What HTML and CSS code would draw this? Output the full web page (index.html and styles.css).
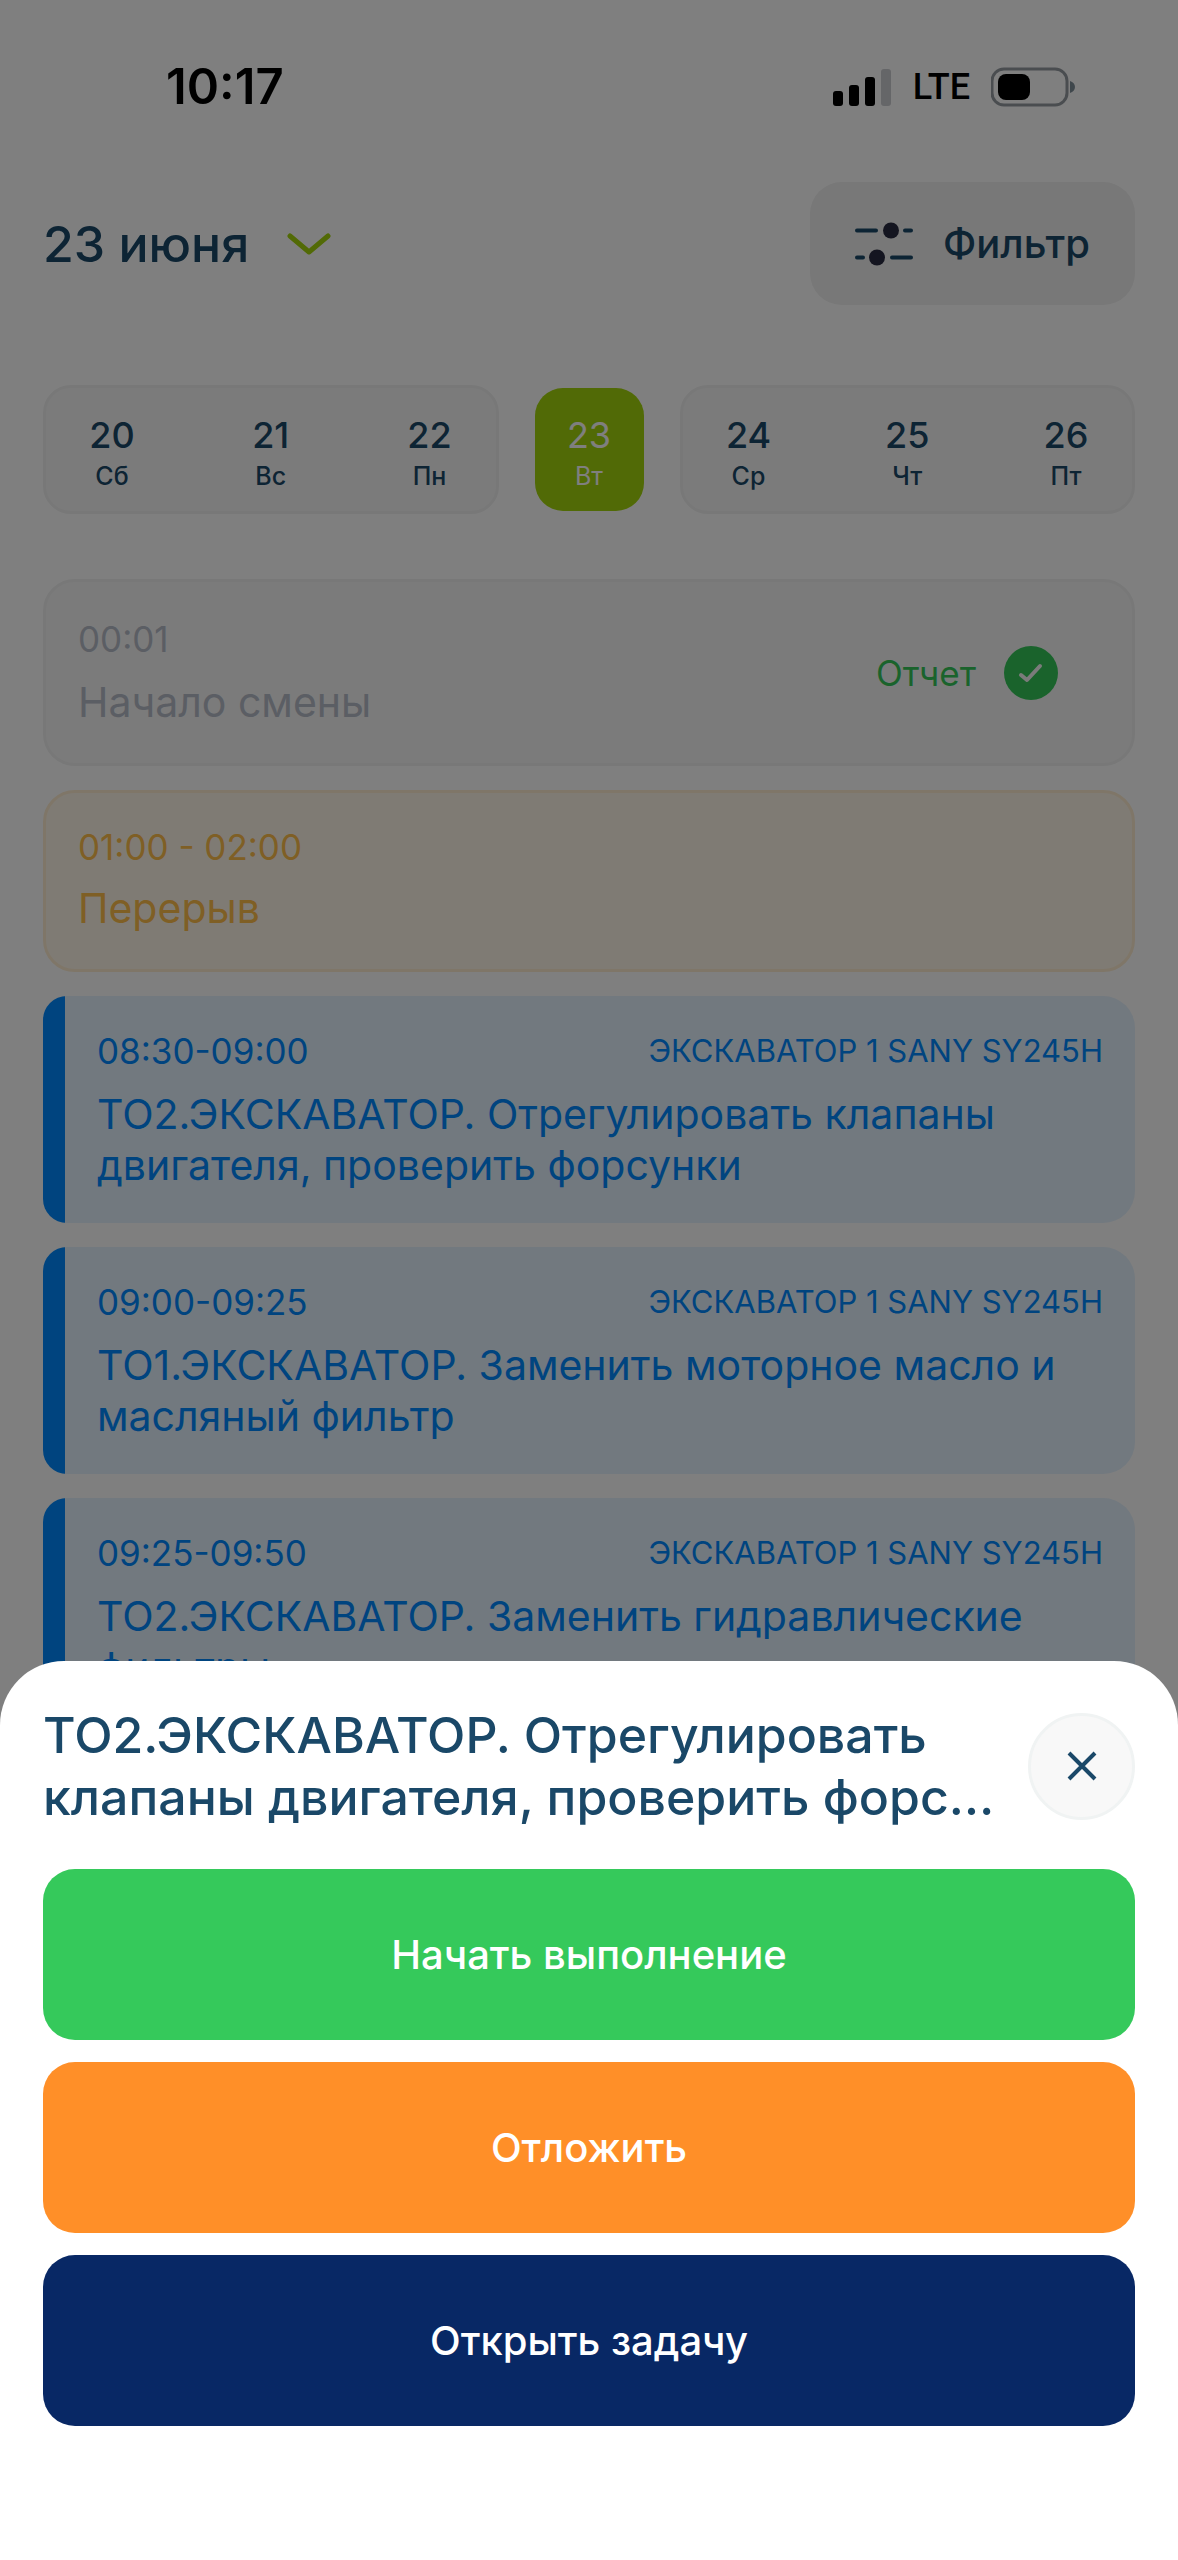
FILE: index.html
```html
<!DOCTYPE html>
<html lang="ru">
<head>
<meta charset="UTF-8">
<meta name="viewport" content="width=device-width, initial-scale=1">
<title>Задачи на 23 июня</title>
<link rel="stylesheet" href="styles.css">
</head>
<body>

<div class="status-bar">
  <span class="status-time">10:17</span>
  <div class="status-icons">
    <svg class="signal" viewBox="0 0 59 38" width="59" height="38">
      <rect x="0" y="23" width="10" height="15" rx="3"/>
      <rect x="16" y="17" width="10" height="21" rx="3"/>
      <rect x="32" y="9" width="10" height="29" rx="3"/>
      <rect x="48" y="1" width="10" height="37" rx="3" fill="#cbccd0"/>
    </svg>
    <span class="network">LTE</span>
    <svg class="battery" viewBox="0 0 84 40" width="84" height="40">
      <rect x="1" y="2" width="75" height="36" rx="12" fill="none" stroke="#959ba1" stroke-width="3"/>
      <rect x="7" y="7" width="32" height="26" rx="8"/>
      <path d="M79 14c3 1 5 3 5 6s-2 5-5 6z" fill="#7f8e99"/>
    </svg>
  </div>
</div>

<main class="page">
  <header class="header">
    <button class="date-picker" type="button">
      23 июня
      <svg viewBox="0 0 44 24" width="44" height="24">
        <path d="M3 4l19 16L41 4" fill="none" stroke="#a4d40c" stroke-width="5" stroke-linecap="round" stroke-linejoin="round"/>
      </svg>
    </button>
    <button class="filter" type="button">
      <svg viewBox="0 0 58 44" width="58" height="44">
        <g stroke="#1a4868" stroke-width="4" stroke-linecap="round">
          <path d="M2 8.500h19M50 8.500h6M2 35.500h6M37 35.500h19"/>
        </g>
        <circle cx="36" cy="8.500" r="8" fill="#292b40"/>
        <circle cx="22" cy="35.500" r="8" fill="#292b40"/>
      </svg>
      Фильтр
    </button>
  </header>

  <nav class="week">
    <div class="days">
      <button class="day" type="button"><span class="num">20</span><span class="name">Сб</span></button>
      <button class="day" type="button"><span class="num">21</span><span class="name">Вс</span></button>
      <button class="day" type="button"><span class="num">22</span><span class="name">Пн</span></button>
    </div>
    <button class="day active" type="button"><span class="num">23</span><span class="name">Вт</span></button>
    <div class="days">
      <button class="day" type="button"><span class="num">24</span><span class="name">Ср</span></button>
      <button class="day" type="button"><span class="num">25</span><span class="name">Чт</span></button>
      <button class="day" type="button"><span class="num">26</span><span class="name">Пт</span></button>
    </div>
  </nav>

  <section class="list">
    <article class="card shift">
      <div>
        <div class="time">00:01</div>
        <div class="title">Начало смены</div>
      </div>
      <div class="report">
        Отчет
        <svg viewBox="0 0 54 54" width="54" height="54">
          <circle cx="27" cy="27" r="27" fill="#34c759"/>
          <path d="M17 29l6 5 13-14" fill="none" stroke="#f7f7f7" stroke-width="4" stroke-linecap="round" stroke-linejoin="round"/>
        </svg>
      </div>
    </article>

    <article class="card break">
      <div class="time">01:00 - 02:00</div>
      <div class="title">Перерыв</div>
    </article>

    <article class="card task">
      <div class="task-top">
        <span class="time">08:30-09:00</span>
        <span class="machine">ЭКСКАВАТОР 1 SANY SY245H</span>
      </div>
      <div class="title">ТО2.ЭКСКАВАТОР. Отрегулировать клапаны двигателя, проверить форсунки</div>
    </article>

    <article class="card task">
      <div class="task-top">
        <span class="time">09:00-09:25</span>
        <span class="machine">ЭКСКАВАТОР 1 SANY SY245H</span>
      </div>
      <div class="title">ТО1.ЭКСКАВАТОР. Заменить моторное масло и масляный фильтр</div>
    </article>

    <article class="card task">
      <div class="task-top">
        <span class="time">09:25-09:50</span>
        <span class="machine">ЭКСКАВАТОР 1 SANY SY245H</span>
      </div>
      <div class="title">ТО2.ЭКСКАВАТОР. Заменить гидравлические фильтры</div>
    </article>
  </section>
</main>

<div class="backdrop"></div>

<section class="sheet" role="dialog" aria-labelledby="sheet-title">
  <div class="sheet-head">
    <h2 class="sheet-title" id="sheet-title">ТО2.ЭКСКАВАТОР. Отрегулировать клапаны двигателя, проверить форс…</h2>
    <button class="close" type="button" aria-label="Закрыть">
      <svg viewBox="0 0 30 30" width="30" height="30">
        <path d="M2 2l26 26M28 2L2 28" fill="none" stroke="#1a4868" stroke-width="4"/>
      </svg>
    </button>
  </div>
  <div class="actions">
    <button class="action start" type="button">Начать выполнение</button>
    <button class="action postpone" type="button">Отложить</button>
    <button class="action open" type="button">Открыть задачу</button>
  </div>
</section>

</body>
</html>
```
FILE: styles.css
```css
:root {
  --text: #1a4868;
  --muted: #b6bcc8;
  --blue: #0088ff;
  --green: #35c95b;
  --lime: #a2d40c;
  --grey-bg: #f7f7f7;
  --grey-border: #f0f1f1;
}
* {
  box-sizing: border-box;
}
body {
  margin: 0;
  min-height: 100vh;
  background: #fff;
  color: var(--text);
  font-family: Inter, Roboto, sans-serif;
}
button {
  border: none;
  padding: 0;
  background: none;
  color: inherit;
  font: inherit;
  cursor: pointer;
}
svg {
  display: block;
  flex-shrink: 0;
}

/* status bar */
.status-bar {
  display: flex;
  justify-content: space-between;
  align-items: center;
  padding: 58px 103px 66px 166px;
  color: #000;
}
.status-time {
  font-size: 49px;
  line-height: 58px;
  font-weight: 600;
}
.status-icons {
  display: flex;
  align-items: center;
  gap: 21px;
}
.network {
  font-family: Roboto, sans-serif;
  font-size: 36px;
  line-height: 48px;
  font-weight: 500;
}

/* header */
.page {
  padding: 0 43px;
}
.header {
  display: flex;
  justify-content: space-between;
  align-items: center;
}
.date-picker {
  display: flex;
  align-items: center;
  gap: 38px;
  font-size: 50px;
  line-height: 62px;
  font-weight: 500;
}
.filter {
  display: flex;
  align-items: center;
  gap: 30px;
  padding: 36px 45px;
  border-radius: 32px;
  background: #f0f0f0;
  font-size: 40px;
  line-height: 51px;
  font-weight: 500;
}

/* week */
.week {
  display: flex;
  align-items: center;
  gap: 36px;
  margin-top: 80px;
}
.days {
  flex: 1;
  display: flex;
  justify-content: space-between;
  padding: 0 36px;
  border: 3px solid var(--grey-border);
  border-radius: 28px;
  background: var(--grey-bg);
}
.day {
  display: flex;
  flex-direction: column;
  align-items: center;
  width: 60px;
  padding: 25px 0 16px;
}
.day.active {
  width: 109px;
  border-radius: 28px;
  background: var(--lime);
  color: #fff;
}
.num {
  font-size: 36px;
  line-height: 44px;
  font-weight: 500;
}
.name {
  font-size: 25px;
  line-height: 38px;
  font-weight: 500;
}
.active .num,
.active .name {
  font-weight: 400;
}

/* cards */
.list {
  display: flex;
  flex-direction: column;
  gap: 24px;
  margin-top: 65px;
}
.card {
  border-radius: 32px;
}
.time {
  font-size: 35px;
  line-height: 44px;
}
.title {
  margin-top: 16px;
  font-size: 41px;
  line-height: 51px;
}
.shift {
  display: flex;
  justify-content: space-between;
  align-items: center;
  padding: 35px 74px 35px 32px;
  border: 3px solid var(--grey-border);
  background: var(--grey-bg);
  color: var(--muted);
}
.report {
  display: flex;
  align-items: center;
  gap: 28px;
  color: #34c759;
  font-size: 35px;
  line-height: 44px;
}
.break {
  padding: 32px 32px 35px;
  border: 3px solid #ffedd0;
  background: #fff6e9;
  color: #ffbe4a;
}
.break .title {
  margin-top: 14px;
}
.task {
  padding: 33px 32px 32px 54px;
  border-radius: 24px 32px 32px 24px;
  background: linear-gradient(to right, var(--blue) 22px, #e4f2ff 22px);
  color: var(--blue);
}
.task-top {
  display: flex;
  justify-content: space-between;
  align-items: center;
}
.machine {
  font-size: 31px;
  line-height: 38px;
}

/* bottom sheet over the dimmed page */
.backdrop {
  position: fixed;
  inset: 0;
  background: rgba(0, 0, 0, 0.5);
}
.sheet {
  position: fixed;
  left: 0;
  right: 0;
  bottom: 0;
  padding: 43px 43px 134px;
  border-radius: 64px 64px 0 0;
  background: #fff;
}
.sheet-head {
  display: flex;
  justify-content: space-between;
  align-items: center;
  gap: 16px;
}
.sheet-title {
  margin: 0;
  font-size: 50px;
  line-height: 62px;
  font-weight: 500;
}
.close {
  display: flex;
  flex-shrink: 0;
  justify-content: center;
  align-items: center;
  width: 107px;
  height: 107px;
  border: 3px solid #f0f3f3;
  border-radius: 50%;
  background: #f8f8f8;
}
.actions {
  display: flex;
  flex-direction: column;
  gap: 22px;
  margin-top: 41px;
}
.action {
  padding: 60px 32px;
  border-radius: 32px;
  color: #fff;
  font-size: 40px;
  line-height: 51px;
  font-weight: 500;
}
.start {
  background: var(--green);
}
.postpone {
  background: #ff8f28;
}
.open {
  background: #082865;
}
```
